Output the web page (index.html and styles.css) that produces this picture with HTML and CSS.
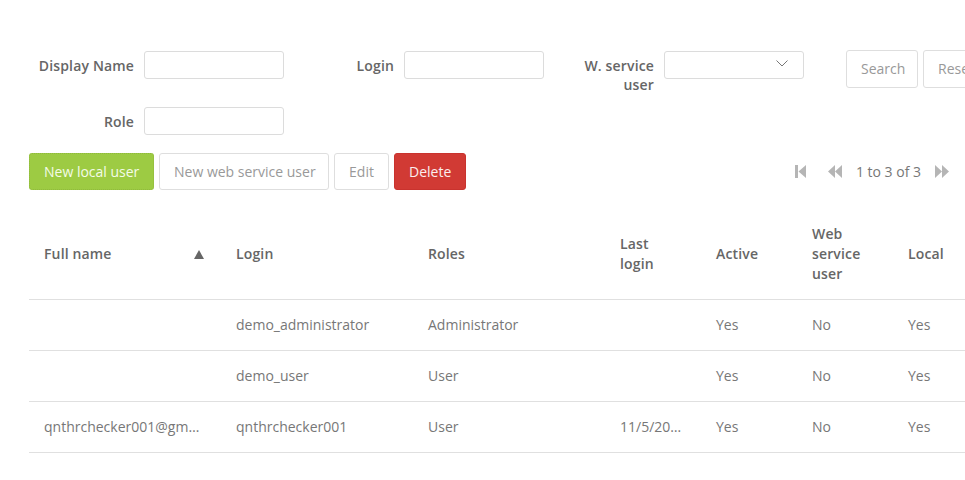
FILE: index.html
```html
<!DOCTYPE html>
<html lang="en">
<head>
<meta charset="utf-8">
<title>Users</title>
<link rel="stylesheet" href="styles.css">
</head>
<body>
<div class="page">
  <form class="filters">
    <div class="group">
      <label class="lbl">Display Name</label>
      <input class="field" type="text">
    </div>
    <div class="group">
      <label class="lbl">Login</label>
      <input class="field" type="text">
    </div>
    <div class="group">
      <label class="lbl">W. service user</label>
      <div class="field select">
        <svg class="chev" width="12" height="7" viewBox="0 0 12 7"><path d="M0.5 0.5 L6 6 L11.5 0.5" fill="none" stroke="#777" stroke-width="1"/></svg>
      </div>
    </div>
    <div class="search-btns">
      <button type="button" class="btn btn-plain">Search</button>
      <button type="button" class="btn btn-plain">Reset</button>
    </div>
    <div class="group">
      <label class="lbl">Role</label>
      <input class="field" type="text">
    </div>
  </form>

  <div class="actions">
    <div class="btn-row">
      <button type="button" class="btn btn-green">New local user</button>
      <button type="button" class="btn btn-plain">New web service user</button>
      <button type="button" class="btn btn-plain">Edit</button>
      <button type="button" class="btn btn-red">Delete</button>
    </div>
    <div class="pager">
      <svg class="pg-first" width="11" height="13" viewBox="0 0 11 13"><rect x="0" y="0" width="3" height="13" fill="#b5b5b5"/><path d="M11 0 L3.5 6.5 L11 13 Z" fill="#b5b5b5"/></svg>
      <svg class="pg-prev" width="14" height="13" viewBox="0 0 14 13"><path d="M7 0 L0 6.5 L7 13 Z" fill="#b5b5b5"/><path d="M14 0 L7 6.5 L14 13 Z" fill="#b5b5b5"/></svg>
      <span class="pg-text">1 to 3 of 3</span>
      <svg class="pg-next" width="14" height="13" viewBox="0 0 14 13"><path d="M0 0 L7 6.5 L0 13 Z" fill="#b5b5b5"/><path d="M7 0 L14 6.5 L7 13 Z" fill="#b5b5b5"/></svg>
    </div>
  </div>

  <table class="grid">
    <colgroup>
      <col class="c-wide"><col class="c-wide"><col class="c-wide">
      <col class="c-narrow"><col class="c-narrow"><col class="c-narrow"><col class="c-narrow">
    </colgroup>
    <thead>
      <tr>
        <th><div class="th-sort"><span>Full name</span><svg width="10" height="9" viewBox="0 0 10 9"><path d="M5 0 L10 9 L0 9 Z" fill="#666"/></svg></div></th>
        <th>Login</th>
        <th>Roles</th>
        <th class="th-narrow">Last login</th>
        <th class="th-narrow">Active</th>
        <th class="th-narrow">Web service user</th>
        <th class="th-narrow">Local</th>
      </tr>
    </thead>
    <tbody>
      <tr>
        <td></td>
        <td>demo_administrator</td>
        <td>Administrator</td>
        <td></td>
        <td>Yes</td>
        <td>No</td>
        <td>Yes</td>
      </tr>
      <tr>
        <td></td>
        <td>demo_user</td>
        <td>User</td>
        <td></td>
        <td>Yes</td>
        <td>No</td>
        <td>Yes</td>
      </tr>
      <tr>
        <td>qnthrchecker001@gm…</td>
        <td>qnthrchecker001</td>
        <td>User</td>
        <td>11/5/20…</td>
        <td>Yes</td>
        <td>No</td>
        <td>Yes</td>
      </tr>
    </tbody>
  </table>
</div>
</body>
</html>
```

FILE: styles.css
```css
html, body {
  margin: 0;
  padding: 0;
  overflow: hidden;
  background: #fff;
}

body {
  font-family: "Open Sans", "Liberation Sans", sans-serif;
  font-size: 14px;
  color: #777;
}

.page {
  padding-top: 50px;
  width: 1100px;
}

.filters {
  display: grid;
  grid-template-columns: 260px 260px 260px auto;
  row-gap: 12px;
  margin: 0 0 0 24px;
}

.group {
  display: flex;
  align-items: flex-start;
  gap: 10px;
  padding-top: 1px;
}

.lbl {
  box-sizing: border-box;
  width: 110px;
  padding-left: 12px;
  flex: none;
  text-align: right;
  font-weight: 600;
  color: #666;
  line-height: 19px;
  padding-top: 5px;
  letter-spacing: 0.15px;
}

.field {
  box-sizing: border-box;
  width: 140px;
  height: 28px;
  border: 1px solid #dcdcdc;
  border-radius: 3px;
  background: #fff;
  margin: 0;
  padding: 0 8px;
  font: inherit;
}

.select {
  display: flex;
  align-items: center;
  justify-content: flex-end;
  padding-right: 15px;
}

.chev {
  display: block;
  margin-top: -3px;
}

.search-btns {
  display: flex;
  gap: 5px;
  margin-left: 42px;
  align-items: flex-start;
}

.btn {
  box-sizing: border-box;
  height: 38px;
  padding: 0 14px;
  border-radius: 3px;
  font-family: inherit;
  font-size: 14px;
  line-height: 20px;
  cursor: pointer;
  white-space: nowrap;
}

.search-btns .btn-plain:first-child {
  width: 72px;
}

.btn-plain {
  background: #fff;
  border: 1px solid #dedede;
  color: #999;
}

.btn-green {
  background: #9dcb43;
  border: 1px dotted #8fb83c;
  color: #f4fbe8;
}

.btn-red {
  background: #d13a34;
  border: 1px solid #c9332e;
  color: #fbeeee;
}

.actions {
  display: flex;
  align-items: center;
  justify-content: space-between;
  width: 920px;
  margin: 18px 0 0 29px;
}

.btn-row {
  display: flex;
  gap: 5px;
}

.btn-row .btn {
  height: 37px;
}

.btn-row .btn-plain:nth-child(2) {
  width: 170px;
}

.btn-row .btn-plain:nth-child(3) {
  width: 55px;
}

.btn-row .btn-red {
  width: 72px;
}

.btn-row .btn-green {
  width: 125px;
}

.pager {
  display: flex;
  align-items: center;
  color: #777;
}

.pager svg {
  display: block;
}

.pg-first {
  margin-right: 22px;
}

.pg-prev {
  margin-right: 14px;
}

.pg-next {
  margin-left: 14px;
}

.pg-text {
  line-height: 20px;
}

.grid {
  table-layout: fixed;
  border-collapse: collapse;
  width: 960px;
  margin: 19px 0 0 29px;
}

.c-wide {
  width: 192px;
}

.c-narrow {
  width: 96px;
}

.grid th,
.grid td {
  padding: 15px 15px;
  line-height: 20px;
  text-align: left;
  vertical-align: middle;
  white-space: nowrap;
  overflow: hidden;
}

.grid th {
  font-weight: 600;
  color: #666;
  white-space: normal;
  border-bottom: 1px solid #e0e0e0;
  letter-spacing: 0.15px;
}

.grid th.th-narrow {
  padding-right: 22px;
}

.grid td {
  color: #777;
  border-bottom: 1px solid #e0e0e0;
}

.th-sort {
  display: flex;
  align-items: center;
  justify-content: space-between;
  padding-right: 2px;
}

.th-sort svg {
  display: block;
}
```
